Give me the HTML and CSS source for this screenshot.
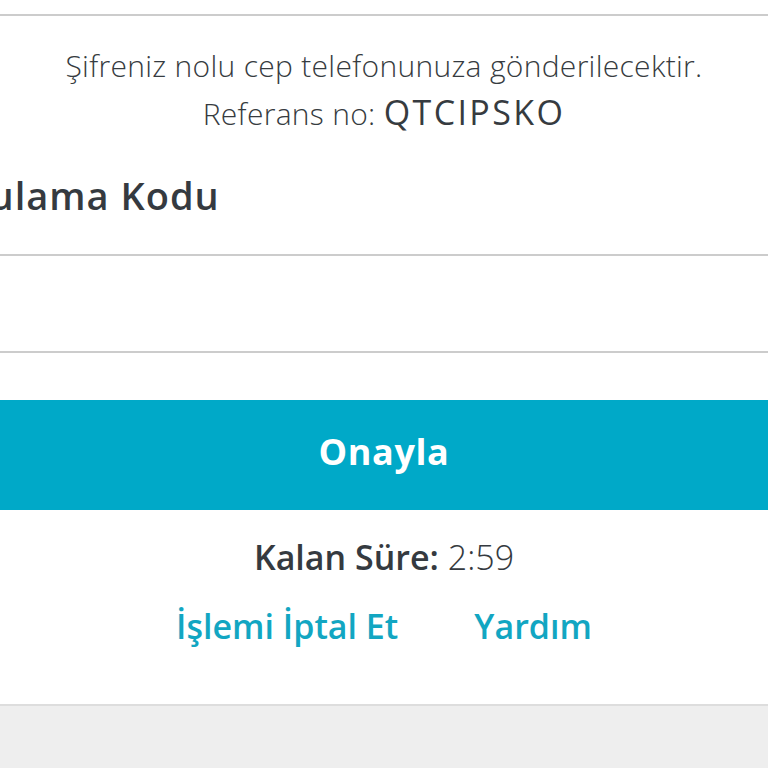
FILE: index.html
```html
<!DOCTYPE html>
<html lang="tr">
<head>
<meta charset="utf-8">
<title>Doğrulama</title>
<link rel="stylesheet" href="styles.css">
</head>
<body>
<div class="card">
  <div class="topbar"></div>
  <div class="info">
    <p class="line">Şifreniz nolu cep telefonunuza gönderilecektir.</p>
    <p class="line">Referans no: <span class="ref">QTCIPSKO</span></p>
  </div>
  <label class="label" for="code">Doğrulama Kodu</label>
  <input class="code-input" id="code" type="text">
  <button class="confirm" type="button">Onayla</button>
  <p class="timer"><span class="timer-label">Kalan Süre:</span> 2:59</p>
  <div class="links">
    <a class="link" href="#">İşlemi İptal Et</a>
    <a class="link" href="#">Yardım</a>
  </div>
</div>
</body>
</html>
```

FILE: styles.css
```css
html, body {
  margin: 0;
  padding: 0;
}
body {
  background: #eeeeee;
  font-family: "Open Sans", Lato, sans-serif;
  color: #353a40;
  height: 768px;
  overflow: hidden;
}
.card {
  background: #ffffff;
  border-bottom: 2px solid #dddddd;
  display: flex;
  flex-direction: column;
  padding-bottom: 58px;
}
.topbar {
  height: 14px;
  border-bottom: 2px solid #cccccc;
}
.info {
  text-align: center;
  padding-top: 26px;
}
.line {
  margin: 0;
  font-size: 30px;
  line-height: 47px;
  font-weight: 300;
  letter-spacing: 0.3px;
  color: #363b40;
}
.ref {
  font-weight: 400;
  font-size: 34px;
  letter-spacing: 2.4px;
}
.label {
  display: block;
  margin: 38px 0 39px -103px;
  font-size: 38px;
  line-height: 40px;
  font-weight: 600;
  letter-spacing: 1px;
  color: #353a40;
}
.code-input {
  display: block;
  box-sizing: border-box;
  width: 100%;
  height: 99px;
  margin: 0;
  border: none;
  border-top: 2px solid #cccccc;
  border-bottom: 2px solid #cccccc;
  background: #ffffff;
  outline: none;
}
.confirm {
  display: block;
  width: 100%;
  height: 110px;
  margin: 47px 0 0;
  padding: 0 0 8px;
  border: none;
  background: #00a9c8;
  color: #ffffff;
  font-family: "Open Sans", Lato, sans-serif;
  font-size: 36px;
  font-weight: 700;
  letter-spacing: 0.6px;
}
.timer {
  margin: 27px 0 0;
  text-align: center;
  font-size: 34px;
  line-height: 40px;
  font-weight: 300;
  color: #353a40;
}
.timer-label {
  font-weight: 600;
}
.links {
  display: flex;
  justify-content: center;
  gap: 76px;
  margin-top: 29px;
  line-height: 40px;
}
.link {
  color: #12a6c2;
  text-decoration: none;
  font-size: 34px;
  font-weight: 600;
}
```
